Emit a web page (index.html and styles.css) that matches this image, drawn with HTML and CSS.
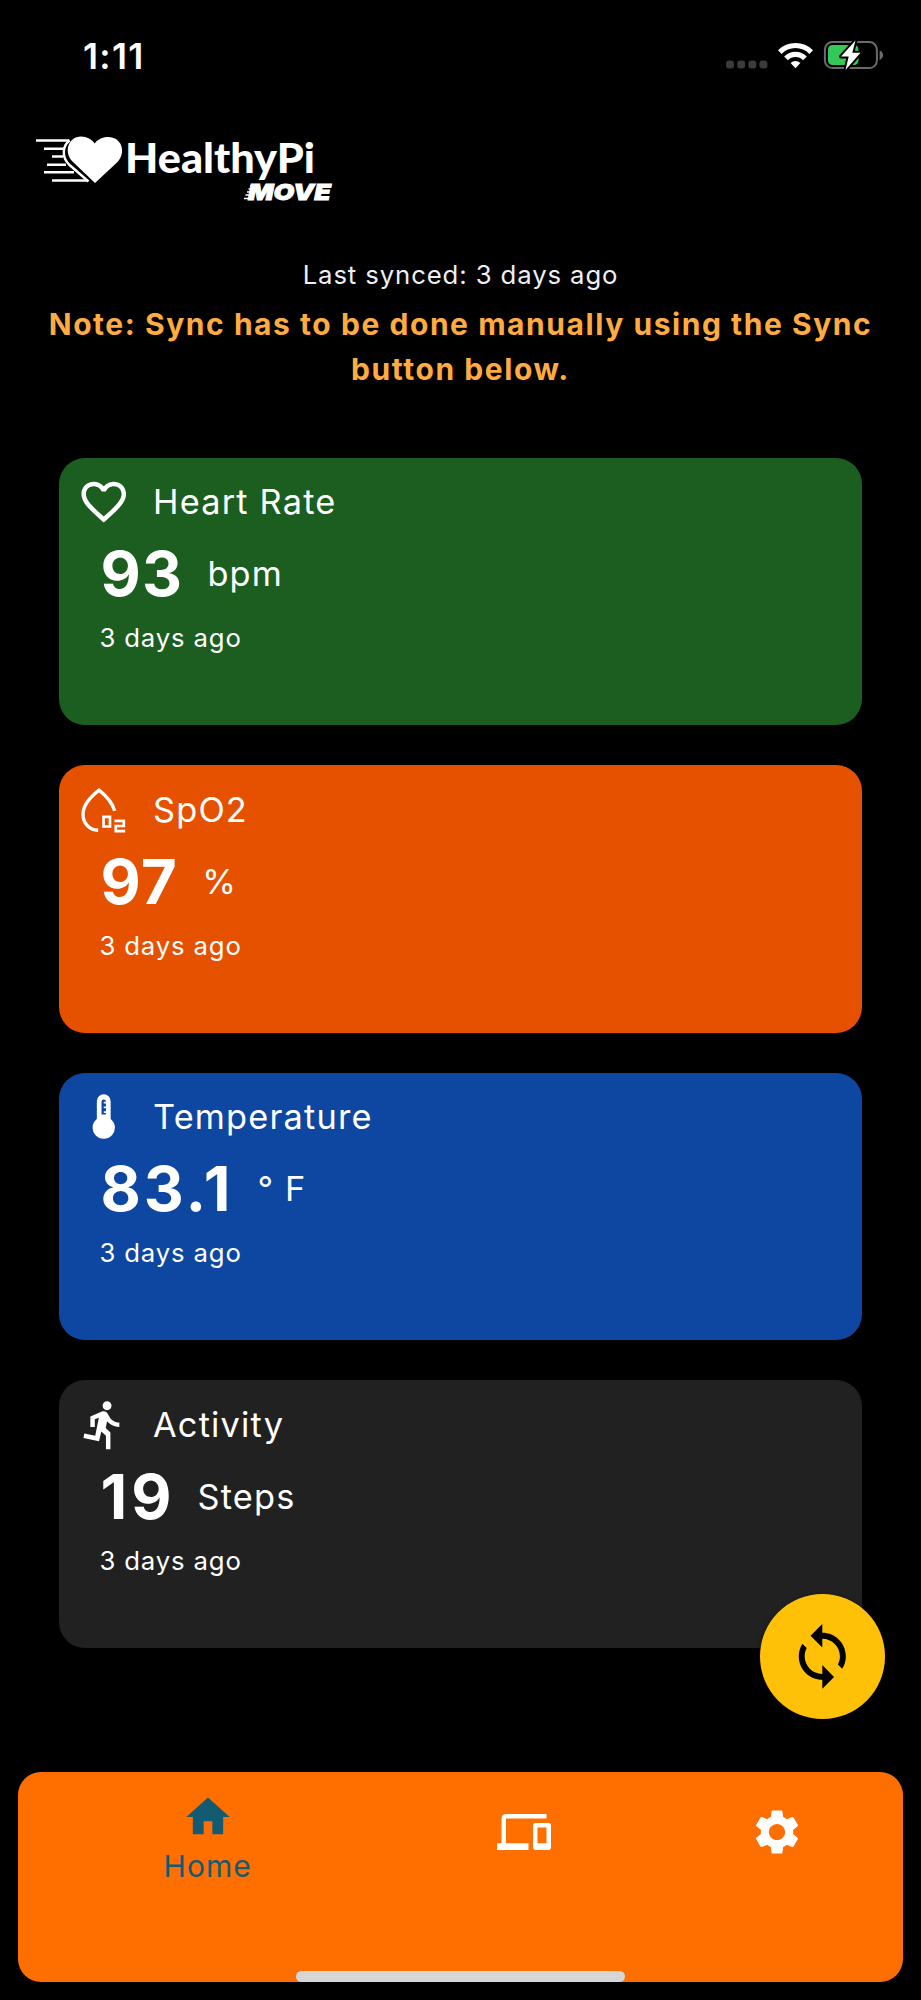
FILE: index.html
```html
<!DOCTYPE html>
<html lang="en">
<head>
  <meta charset="UTF-8">
  <meta name="viewport" content="width=device-width, initial-scale=1">
  <title>HealthyPi Move</title>
  <link rel="stylesheet" href="styles.css">
</head>
<body>

<div class="screen">
  <div class="status-bar">
    <span class="clock">1:11</span>
    <svg class="status-icons" viewBox="0 0 160 34">
      <g fill="#3b3b3b">
        <rect x="0" y="21.5" width="8" height="8" rx="3.2"/>
        <rect x="11.2" y="21.5" width="8" height="8" rx="3.2"/>
        <rect x="22.3" y="21.5" width="8" height="8" rx="3.2"/>
        <rect x="33.4" y="21.5" width="8" height="8" rx="3.2"/>
      </g>
      <!-- wifi -->
      <g fill="#fff">
        <path d="M52 11.2a24.6 24.6 0 0 1 35 0l-3.600 3.700a19.600 19.600 0 0 0-27.800 0z"/>
        <path d="M58.200 17.500a15.900 15.900 0 0 1 22.600 0l-3.700 3.700a10.700 10.700 0 0 0-15.200 0z"/>
        <path d="M64.600 24a7.200 7.200 0 0 1 9.800 0l-4.900 5.200z"/>
      </g>
      <!-- battery -->
      <rect x="98.900" y="3.100" width="52" height="26" rx="7.500" fill="none" stroke="#6b6b6b" stroke-width="2"/>
      <path d="M153.600 11.600c4.600 1.300 4.600 8 0 9.300z" fill="#6b6b6b"/>
      <rect x="102" y="6" width="30.500" height="20" rx="4.500" fill="#34c759"/>
      <path d="M129.500 1.500L115 17.500h7.700L119.500 31 134.500 13.800h-8.200z" fill="#fff" stroke="#000" stroke-width="4" stroke-linejoin="round" paint-order="stroke"/>
    </svg>
  </div>

  <header class="header">
    <svg class="logo" viewBox="0 0 310 80">
      <g fill="none" stroke="#fff" stroke-width="2.400">
        <path d="M1 10.500H34.500M9 18.800H29M17 26.500H28M12 34.800H31M9 42.300H39M17 50.500H52"/>
        <path d="M34.500 10.500C27.500 16 26.500 27 34 34.500L53.500 51.500"/>
      </g>
      <path d="M60 53L37.500 31.500C28.500 22.500 33 6.500 46 6.500c6 0 11 3 13.700 7C62.500 9.500 67.500 7 73 7c14 0 18.500 15.500 9.500 25z" fill="#fff"/>
      <text class="logo-name" x="90" y="43.400" textLength="190" lengthAdjust="spacingAndGlyphs">HealthyPi</text>
      <text class="logo-move" x="213" y="70" textLength="83" lengthAdjust="spacingAndGlyphs">MOVE</text>
      <path d="M215 56h6M213.500 59h6M212 62h6M210.500 65h6M209 68.500h6" stroke="#fff" stroke-width="1.300"/>
    </svg>
  </header>

  <p class="synced">Last synced: 3 days ago</p>
  <p class="note">Note: Sync has to be done manually using the Sync button below.</p>

  <main class="cards">
    <section class="card heart-rate">
      <div class="card-title">
        <svg class="icon" viewBox="0 0 24 24"><path d="M16.500 3c-1.740 0-3.410.81-4.500 2.090C10.910 3.810 9.240 3 7.500 3 4.420 3 2 5.420 2 8.500c0 3.780 3.400 6.860 8.550 11.540L12 21.350l1.450-1.320C18.600 15.360 22 12.280 22 8.500 22 5.420 19.580 3 16.500 3zm-4.400 15.550l-.1.100-.1-.1C7.140 14.240 4 11.390 4 8.500 4 6.500 5.500 5 7.500 5c1.540 0 3.040.99 3.570 2.360h1.870C13.460 5.990 14.960 5 16.500 5c2 0 3.500 1.500 3.500 3.500 0 2.890-3.140 5.740-7.900 10.050z"/></svg>
        <span>Heart Rate</span>
      </div>
      <div class="reading"><span class="value">93</span><span class="unit">bpm</span></div>
      <p class="updated">3 days ago</p>
    </section>

    <section class="card spo2">
      <div class="card-title">
        <svg class="icon" viewBox="0 0 24 24">
          <path class="line" d="M9.500 21.200C5.300 21 2.700 17.900 2.700 14 2.700 9.900 6.300 6 9.900 3.200c3.100 2.500 6 5.500 7 9.300"/>
          <path class="line thin" d="M11.900 15.200h2.900v4.300h-2.900zM16.800 17h4.200v2.300h-3.600v2.300h4.200"/>
        </svg>
        <span>SpO2</span>
      </div>
      <div class="reading"><span class="value">97</span><span class="unit">%</span></div>
      <p class="updated">3 days ago</p>
    </section>

    <section class="card temperature">
      <div class="card-title">
        <svg class="icon" viewBox="0 0 24 24"><path fill-rule="evenodd" d="M8.900 5a3.100 3.100 0 0 1 6.200 0v8a5 5 0 1 1-6.200 0zM11 11h2v-.7h-1V9.500h1V8.200h-1v-.8h1V6h-1v-.7h1a1 1 0 0 0-2 0z"/></svg>
        <span>Temperature</span>
      </div>
      <div class="reading"><span class="value">83.1</span><span class="unit">° F</span></div>
      <p class="updated">3 days ago</p>
    </section>

    <section class="card activity">
      <div class="card-title">
        <svg class="icon" viewBox="0 0 24 24"><path d="M13.490 5.480c1.100 0 2-.9 2-2s-.9-2-2-2-2 .9-2 2 .9 2 2 2zm-3.600 13.900l1-4.400 2.100 2v6h2v-7.500l-2.100-2 .6-3c1.300 1.500 3.300 2.500 5.500 2.500v-2c-1.900 0-3.500-1-4.300-2.400l-1-1.600c-.4-.6-1-1-1.700-1-.3 0-.5.1-.8.1l-5.200 2.200v4.700h2v-3.400l1.800-.7-1.600 8.100-4.900-1-.4 2 7 1.400z"/></svg>
        <span>Activity</span>
      </div>
      <div class="reading"><span class="value">19</span><span class="unit">Steps</span></div>
      <p class="updated">3 days ago</p>
    </section>
  </main>

  <button class="sync-btn" aria-label="Sync">
    <svg viewBox="0 0 24 24"><path d="M12 4V1L8 5l4 4V6c3.310 0 6 2.690 6 6 0 1.010-.25 1.970-.7 2.800l1.460 1.460C19.540 15.030 20 13.570 20 12c0-4.420-3.580-8-8-8zm0 14c-3.310 0-6-2.690-6-6 0-1.010.25-1.970.7-2.800L5.240 7.740C4.460 8.970 4 10.430 4 12c0 4.420 3.580 8 8 8v3l4-4-4-4v3z"/></svg>
  </button>

  <nav class="tab-bar">
    <a class="tab active">
      <svg viewBox="0 0 24 24"><path d="M10 20v-6h4v6h5v-8h3L12 3 2 12h3v8z"/></svg>
      <span>Home</span>
    </a>
    <a class="tab">
      <svg viewBox="0 0 24 24"><path d="M4 6h18V4H4c-1.100 0-2 .9-2 2v11H0v3h14v-3H4V6zm19 2h-6c-.55 0-1 .45-1 1v10c0 .55.45 1 1 1h6c.55 0 1-.45 1-1V9c0-.55-.45-1-1-1zm-1 9h-4v-7h4v7z"/></svg>
    </a>
    <a class="tab">
      <svg viewBox="0 0 24 24"><path d="M19.140 12.940c.04-.3.060-.61.060-.94 0-.32-.02-.64-.07-.94l2.030-1.580c.18-.14.230-.41.120-.61l-1.920-3.320c-.12-.22-.37-.29-.59-.22l-2.390.96c-.5-.38-1.030-.7-1.620-.94l-.36-2.540c-.04-.24-.24-.41-.48-.41h-3.840c-.24 0-.43.170-.47.410l-.36 2.540c-.59.240-1.130.570-1.620.94l-2.390-.96c-.22-.08-.47 0-.59.220L2.740 8.870c-.12.210-.08.470.12.610l2.030 1.580c-.05.300-.09.630-.09.940s.02.640.07.940l-2.030 1.580c-.18.140-.23.410-.12.610l1.920 3.320c.12.220.37.290.59.220l2.390-.96c.5.380 1.030.7 1.620.94l.36 2.540c.05.240.24.410.48.410h3.840c.24 0 .44-.17.470-.41l.36-2.540c.59-.24 1.130-.56 1.620-.94l2.390.96c.22.080.47 0 .59-.22l1.920-3.320c.12-.22.070-.47-.12-.61l-2.010-1.580zM12 15.600c-1.980 0-3.600-1.620-3.600-3.600s1.620-3.600 3.600-3.600 3.600 1.620 3.600 3.600-1.620 3.600-3.600 3.600z"/></svg>
    </a>
  </nav>
  <div class="home-indicator"></div>
</div>

</body>
</html>
```
FILE: styles.css
```css
* {
  box-sizing: border-box;
}

body {
  margin: 0;
  background: #000;
  color: #fff;
  font-family: 'Inter', 'Liberation Sans', sans-serif;
}

p {
  margin: 0;
}

.screen {
  position: relative;
  display: flex;
  flex-direction: column;
  width: 921px;
  height: 2000px;
  padding-bottom: 18px;
  overflow: hidden;
}

.status-bar {
  display: flex;
  justify-content: space-between;
  align-items: center;
  height: 112px;
  padding: 0 35px 0 83px;
}

.clock {
  font-size: 35.5px;
  font-weight: 600;
  letter-spacing: 1.3px;
}

.status-icons {
  width: 160px;
  height: 34px;
}

.header {
  height: 140px;
  padding: 18px 0 0 35px;
}

.logo {
  display: block;
  width: 310px;
  height: 80px;
}

.logo-name {
  font-family: 'Lato', sans-serif;
  font-size: 41px;
  font-weight: 900;
  fill: #fff;
}

.logo-move {
  font-size: 22px;
  font-weight: 900;
  font-style: italic;
  fill: #fff;
  stroke: #fff;
  stroke-width: 0.8;
}

.synced {
  padding-top: 6px;
  font-size: 25.7px;
  line-height: 34px;
  letter-spacing: 0.9px;
  text-align: center;
  color: #efefef;
}

.note {
  padding: 10px 40px 0;
  font-size: 30px;
  font-weight: 700;
  line-height: 44.5px;
  letter-spacing: 1.55px;
  text-align: center;
  color: #ffab40;
}

.cards {
  display: flex;
  flex-direction: column;
  gap: 40px;
  padding: 66.6px 59px 0;
}

.card {
  height: 267.5px;
  padding: 17.5px;
  border-radius: 26px;
}

.heart-rate {
  background: #1b5e20;
}

.spo2 {
  background: #e65100;
}

.temperature {
  background: #0d47a1;
}

.activity {
  background: #212121;
}

.card-title {
  display: flex;
  align-items: center;
  gap: 23px;
  height: 53.5px;
  font-size: 34.3px;
  letter-spacing: 1.2px;
}

.icon {
  width: 53.5px;
  height: 53.5px;
  fill: #fff;
}

.icon .line {
  fill: none;
  stroke: #fff;
  stroke-width: 1.5;
}

.icon .thin {
  stroke-width: 1.2;
}

.reading {
  display: flex;
  align-items: center;
  gap: 24px;
  height: 73px;
  margin-top: 8.5px;
  padding-left: 24px;
}

.value {
  font-size: 62px;
  font-weight: 700;
  letter-spacing: 1.3px;
}

.temperature .value {
  letter-spacing: 3px;
}

.activity .value {
  letter-spacing: 4px;
}

.activity .reading {
  gap: 22px;
}

.unit {
  font-size: 34.3px;
  letter-spacing: 1.2px;
}

.updated {
  margin-top: 11px;
  padding-left: 23px;
  font-size: 25.7px;
  line-height: 34px;
  letter-spacing: 0.85px;
}

.sync-btn {
  position: absolute;
  right: 36px;
  bottom: 281.5px;
  display: flex;
  align-items: center;
  justify-content: center;
  width: 125px;
  height: 125px;
  padding: 0;
  border: none;
  border-radius: 50%;
  background: #ffc107;
  box-shadow: 0 1px 4px rgba(0, 0, 0, 0.5);
}

.sync-btn svg {
  width: 70.6px;
  height: 70.6px;
}

.tab-bar {
  display: grid;
  grid-template-columns: 3fr 2fr 2fr;
  height: 210px;
  margin: auto 18px 0;
  padding-top: 19px;
  border-radius: 23px;
  background: #ff6f00;
}

.tab {
  display: flex;
  flex-direction: column;
  align-items: center;
  padding-top: 14px;
  font-size: 30px;
  letter-spacing: 1px;
}

.tab svg {
  width: 54px;
  height: 54px;
  fill: #fff;
}

.tab.active {
  padding-top: 0;
  color: #125b73;
}

.tab.active svg {
  width: 52px;
  height: 52px;
  margin-bottom: 5px;
  fill: #125b73;
}

.home-indicator {
  position: absolute;
  left: 296px;
  bottom: 18px;
  width: 329px;
  height: 11px;
  border-radius: 6px;
  background: #d6d6d6;
}
```
